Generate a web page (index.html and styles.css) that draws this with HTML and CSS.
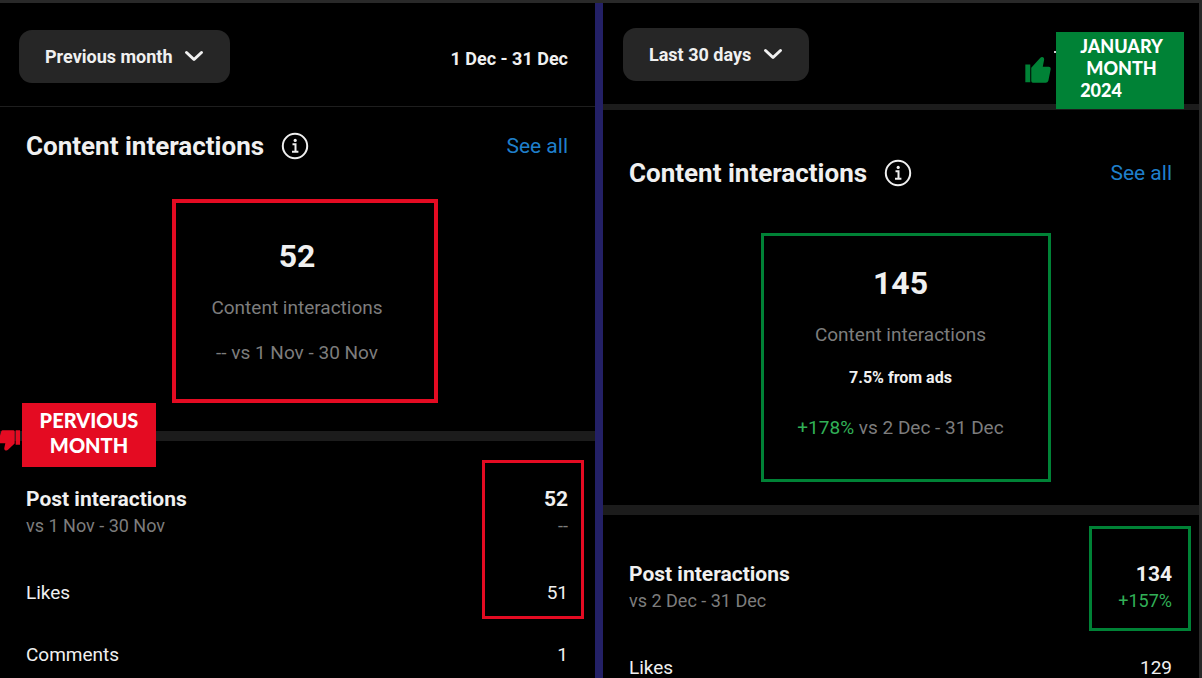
FILE: index.html
```html
<!DOCTYPE html>
<html lang="en">
<head>
  <meta charset="UTF-8">
  <meta name="viewport" content="width=device-width, initial-scale=1">
  <title>Content interactions</title>
  <link rel="stylesheet" href="styles.css">
</head>
<body>

  <main class="board">

    <!-- Previous month -->
    <section class="panel previous">
      <header class="panel-header">
        <label class="period">
          <select class="period-select" aria-label="Period">
            <option>Previous month</option>
          </select>
          <svg class="chevron" viewBox="0 0 20 12"><path d="M2.5 2.5 10 9.5 17.5 2.5"/></svg>
        </label>
        <span class="dates">1 Dec - 31 Dec</span>
      </header>

      <div class="summary">
        <div class="title-row">
          <h2 class="title">Content interactions</h2>
          <svg class="info" viewBox="0 0 28 28">
            <circle cx="14" cy="14" r="12.2"/>
            <path d="M11.5 12.2h3v7.3M11 19.8h6.4"/>
            <circle class="dot" cx="14.2" cy="8.4" r="1.6"/>
          </svg>
          <a class="see-all" href="#">See all</a>
        </div>
        <div class="total">
          <strong class="number">52</strong>
          <span class="muted">Content interactions</span>
          <span class="muted compare">-- vs 1 Nov - 30 Nov</span>
        </div>
        <div class="frame frame-total"></div>
      </div>

      <div class="breakdown">
        <div class="row">
          <span class="row-name">Post interactions</span>
          <span class="row-name">52</span>
        </div>
        <div class="row sub muted">
          <span>vs 1 Nov - 30 Nov</span>
          <span>--</span>
        </div>
        <div class="row metric first">
          <span>Likes</span>
          <span>51</span>
        </div>
        <div class="row metric">
          <span>Comments</span>
          <span>1</span>
        </div>
        <div class="frame frame-rows"></div>
        <div class="tag">PERVIOUS<br>MONTH</div>
        <svg class="thumb" viewBox="0 149 60 62">
          <path d="M47 149h13v44H47zM8 149h32q4 0 4 4v36L24 208q-4 4-9 1-3-2-2-7l3-14H0v-22l4-14q1-3 4-3z"/>
        </svg>
      </div>
    </section>

    <!-- Last 30 days -->
    <section class="panel current">
      <header class="panel-header">
        <label class="period">
          <select class="period-select" aria-label="Period">
            <option>Last 30 days</option>
          </select>
          <svg class="chevron" viewBox="0 0 20 12"><path d="M2.5 2.5 10 9.5 17.5 2.5"/></svg>
        </label>
        <div class="tag">
          <div class="tag-text">JANUARY<br>MONTH<div class="year">2024</div></div>
        </div>
        <svg class="thumb" viewBox="75 172 77 79">
          <path d="M75 195h15v54H75zM93 205l27-30q4-4 9-2 4 2 3 8l-4 21h18q7 0 6 7l-7 35q-2 6-8 6H98q-5 0-5-5z"/>
        </svg>
      </header>

      <div class="summary">
        <div class="title-row">
          <h2 class="title">Content interactions</h2>
          <svg class="info" viewBox="0 0 28 28">
            <circle cx="14" cy="14" r="12.2"/>
            <path d="M11.5 12.2h3v7.3M11 19.8h6.4"/>
            <circle class="dot" cx="14.2" cy="8.4" r="1.6"/>
          </svg>
          <a class="see-all" href="#">See all</a>
        </div>
        <div class="total">
          <strong class="number">145</strong>
          <span class="muted">Content interactions</span>
          <strong class="ads">7.5% from ads</strong>
          <span class="muted compare"><span class="up">+178%</span> vs 2 Dec - 31 Dec</span>
        </div>
        <div class="frame frame-total"></div>
      </div>

      <div class="breakdown">
        <div class="row">
          <span class="row-name">Post interactions</span>
          <span class="row-name">134</span>
        </div>
        <div class="row sub muted">
          <span>vs 2 Dec - 31 Dec</span>
          <span class="up">+157%</span>
        </div>
        <div class="row metric first">
          <span>Likes</span>
          <span>129</span>
        </div>
        <div class="frame frame-rows"></div>
      </div>
    </section>

  </main>

</body>
</html>
```
FILE: styles.css
```css
* {
  box-sizing: border-box;
}
body {
  margin: 0;
  background: #000;
  color: #f0f0f0;
  font-family: Roboto, sans-serif;
  font-size: 19px;
  line-height: 24px;
}
.board {
  display: flex;
  height: 100vh;
  overflow: hidden;
  border-top: 3px solid #292929;
  border-right: 3px solid #292929;
}
.panel {
  flex: 1;
}
.previous {
  --accent: #e40b22;
}
.current {
  --accent: #008236;
  flex: 1 1 9px;
  border-left: 8px solid #232066;
}

/* header */
.panel-header {
  position: relative;
  display: flex;
  align-items: center;
  justify-content: space-between;
  padding: 27px 27px 23px 19px;
  border-bottom: 1px solid #1e1e1e;
}
.current .panel-header {
  padding-top: 25px;
  padding-left: 20px;
  border-bottom: 6px solid #1c1c1c;
}
.period {
  position: relative;
  display: flex;
}
.period-select {
  height: 53px;
  padding: 0 57px 0 26px;
  border: 0;
  border-radius: 13px;
  background: #262626;
  color: #f0f0f0;
  font: 700 18px/24px Roboto, sans-serif;
  appearance: none;
}
.chevron {
  position: absolute;
  top: 20px;
  right: 26px;
  width: 20px;
  height: 12px;
  fill: none;
  stroke: #f0f0f0;
  stroke-width: 3;
  stroke-linecap: round;
  stroke-linejoin: round;
}
.dates {
  padding-top: 4px;
  font-size: 18px;
  font-weight: 700;
}

/* totals */
.summary {
  position: relative;
  padding: 23px 27px 66px 26px;
  border-bottom: 10px solid #1c1c1c;
}
.current .summary {
  padding-top: 47px;
  padding-bottom: 65px;
}
.title-row {
  display: flex;
  align-items: center;
}
.title {
  margin: 0;
  font-size: 26px;
  font-weight: 700;
  line-height: 32px;
}
.info {
  width: 28px;
  height: 28px;
  margin-left: 17px;
  fill: none;
  stroke: #f0f0f0;
  stroke-width: 2;
}
.info .dot {
  fill: #f0f0f0;
  stroke: none;
}
.see-all {
  margin-left: auto;
  color: #1f7fcb;
  font-size: 21px;
  text-decoration: none;
}
.total {
  display: flex;
  flex-direction: column;
  align-items: center;
  margin-top: 74px;
}
.number {
  margin-bottom: 20px;
  font-size: 32px;
  line-height: 40px;
}
.muted {
  color: #7d7d7d;
}
.compare {
  margin-top: 21px;
}
.ads {
  margin-top: 19px;
  font-size: 16px;
}
.ads + .compare {
  margin-top: 26px;
}
.up {
  color: #31b057;
}

/* rows */
.breakdown {
  position: relative;
  padding: 44px 27px 0 26px;
}
.current .breakdown {
  padding-top: 45px;
}
.row {
  display: flex;
  justify-content: space-between;
}
.row-name {
  font-size: 21px;
  font-weight: 700;
  line-height: 29px;
}
.sub {
  font-size: 18px;
}
.metric {
  margin-top: 38px;
}
.metric.first {
  margin-top: 43px;
}

/* coloured frames and tags laid over the panels */
.frame {
  position: absolute;
  border: 3px solid var(--accent);
}
.previous .frame-total {
  top: 92px;
  left: 172px;
  width: 266px;
  height: 204px;
  border-width: 4px;
}
.previous .frame-rows {
  top: 19px;
  right: 11px;
  width: 102px;
  height: 159px;
}
.current .frame-total {
  top: 123px;
  left: 158px;
  width: 290px;
  height: 249px;
}
.current .frame-rows {
  top: 11px;
  right: 8px;
  width: 102px;
  height: 105px;
}
.tag {
  position: absolute;
  display: flex;
  justify-content: center;
  background: var(--accent);
  color: #fff;
  font-family: Lato, sans-serif;
  font-weight: 900;
  text-align: center;
}
.previous .tag {
  top: -38px;
  left: 22px;
  width: 134px;
  height: 64px;
  padding-top: 5px;
  font-size: 20px;
  line-height: 25px;
}
.current .tag {
  top: 29px;
  right: 15px;
  width: 128px;
  height: 77px;
  padding: 3px 0 0 3px;
  font-size: 18px;
  line-height: 22px;
}
/* end of the covered date */
.current .tag::before {
  content: "";
  position: absolute;
  top: 19px;
  left: -2px;
  width: 2px;
  height: 2px;
  background: #d0d0d0;
}
.year {
  text-align: left;
}
.thumb {
  position: absolute;
  fill: var(--accent);
}
.previous .thumb {
  top: -11px;
  left: 0;
  width: 20px;
  height: 21px;
}
.current .thumb {
  top: 54px;
  right: 148px;
  width: 26px;
  height: 26px;
}
```
